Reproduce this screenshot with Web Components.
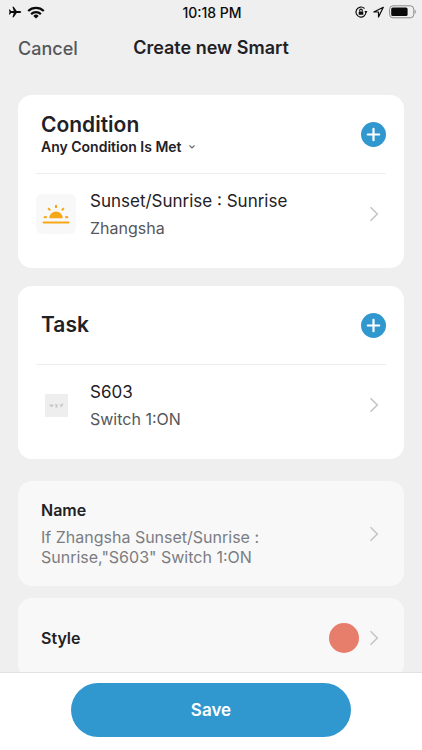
<!DOCTYPE html>
<html lang="en">
<head>
<meta charset="utf-8">
<meta name="viewport" content="width=device-width, initial-scale=1">
<title>Create new Smart</title>
<style>
  html, body { margin: 0; }
  body {
    --blue: #3198cf;
    --ink: #1f2126;
    --soft: #55575b;
    font-family: Inter, "Liberation Sans", sans-serif;
    color: var(--ink);
    background: #efefef;
  }
</style>
</head>
<body>
<smart-page>
  <status-bar slot="top">10:18 PM</status-bar>
  <nav-bar slot="top">Create new Smart</nav-bar>

  <rule-card heading="Condition" add-label="Add condition">
    <mode-picker slot="mode">Any Condition Is Met</mode-picker>
    <rule-row>
      <sunrise-icon slot="icon"></sunrise-icon>
      Sunset/Sunrise : Sunrise
      <span slot="detail">Zhangsha</span>
    </rule-row>
  </rule-card>

  <rule-card heading="Task" add-label="Add task">
    <rule-row>
      <switch-thumb slot="icon"></switch-thumb>
      S603
      <span slot="detail">Switch 1:ON</span>
    </rule-row>
  </rule-card>

  <setting-card class="name" heading="Name">
    <span slot="detail">If Zhangsha Sunset/Sunrise :<br>Sunrise,"S603" Switch 1:ON</span>
  </setting-card>
  <setting-card heading="Style">
    <color-dot slot="value"></color-dot>
  </setting-card>

  <save-bar slot="bottom">Save</save-bar>
</smart-page>

<script>
  const define = (name, html, setup) => {
    const template = document.createElement('template');
    template.innerHTML = `<style>
      *, :host { box-sizing: border-box; }
      button { font: inherit; color: inherit; background: none; border: 0; padding: 0; margin: 0; cursor: pointer; }
      h1, h2, p { margin: 0; }
      svg { display: block; flex: none; }
    </style>` + html;
    customElements.define(name, class extends HTMLElement {
      constructor() {
        super();
        this.attachShadow({ mode: 'open' }).append(template.content.cloneNode(true));
      }
      connectedCallback() {
        if (setup) setup(this, this.shadowRoot);
      }
    });
  };

  define('chevron-icon', `
    <style>:host { display: block; flex: none; }</style>
    <svg width="10" height="16" viewBox="0 0 10 16" fill="none" stroke="#c5c6ca" stroke-width="1.6" aria-hidden="true"><path d="M1.5 1.3 8.3 8l-6.8 6.7"/></svg>`);

  define('sunrise-icon', `
    <style>
      :host { display: grid; place-items: center; width: 40px; height: 40px; border-radius: 6px; background: #f8f8f8; }
    </style>
    <svg width="28" height="22" viewBox="0 0 28 22" fill="none" stroke="#f5a716" stroke-width="2" aria-hidden="true">
      <path d="M1.5 19.5h25" stroke-linecap="round"/>
      <path d="M7.3 15.2a6.7 6.7 0 0 1 13.4 0z" fill="#f5a716" stroke="none"/>
      <path d="M14 2v3M6.2 5.2l2 2.2M21.8 5.2l-2 2.2M1.8 14.2l3-.1M26.2 14.2l-3-.1"/>
    </svg>`);

  define('switch-thumb', `
    <style>:host { display: grid; place-items: center; width: 40px; height: 40px; }</style>
    <svg width="23" height="23" viewBox="0 0 23 23" fill="none" stroke="#b8b8b8" stroke-width=".9" aria-hidden="true">
      <rect width="23" height="23" fill="#eee" stroke="none"/>
      <path d="M4.8 11.2h3.4l-1.6 1.6zM10 10.6l2.4.5-1.8 1.6 2 .4M14.6 10.8l3.2.3-2.4 1.9M17.2 10.2l1-.6"/>
    </svg>`);

  define('color-dot', `
    <style>:host { display: block; width: 30px; height: 30px; border-radius: 50%; background: #e67e6b; }</style>`);

  define('status-bar', `
    <style>
      :host { display: grid; grid-template-columns: 1fr auto 1fr; align-items: center; height: 24px; padding: 0 6px 0 8px; font-size: 14px; font-weight: 500; color: #0b0b0b; }
      div { display: flex; align-items: center; gap: 5px; }
      .right { justify-content: end; }
    </style>
    <div>
      <svg width="14" height="14" viewBox="0 0 14 14" fill="#0b0b0b" aria-hidden="true"><path d="M13.2 7c0 .6-.8.9-1.6.9H8.7l-3 4.4H4.4l1.4-4.4H3.1L1.8 9.5H.9L1.5 7 .9 4.5h.9l1.3 1.6h2.7L4.4 1.7h1.3l3 4.4h2.9c.8 0 1.6.3 1.6.9z"/></svg>
      <svg width="18" height="13" viewBox="0 0 18 13" fill="none" stroke="#0b0b0b" stroke-width="2.2" aria-hidden="true"><path d="M1.2 5a11.2 11.2 0 0 1 15.6 0M4.1 8.1a7 7 0 0 1 9.8 0"/><path d="M9 12.6 6.3 9.9a3.8 3.8 0 0 1 5.4 0z" fill="#0b0b0b" stroke="none"/></svg>
    </div>
    <slot></slot>
    <div class="right">
      <svg width="14" height="14" viewBox="0 0 14 14" fill="none" stroke="#0b0b0b" stroke-width="1.1" aria-hidden="true">
        <path d="M12 7a5 5 0 1 1-1.5-3.5M12 7a5 5 0 0 1-1.6 3.6"/><path d="M10.3 6h3.2l-1.6 2.2z" fill="#0b0b0b" stroke="none"/>
        <rect x="4.7" y="6.4" width="4.6" height="3.4" rx=".5" fill="#0b0b0b" stroke="none"/><path d="M5.7 6.6V5.4a1.3 1.3 0 0 1 2.6 0v1.2"/>
      </svg>
      <svg width="11" height="12" viewBox="0 0 11 12" fill="none" stroke="#0b0b0b" stroke-width="1.2" stroke-linejoin="round" aria-hidden="true"><path d="M10.3 1.3.8 6h4.7v5z"/></svg>
      <svg width="27" height="14" viewBox="0 0 27 14" aria-hidden="true"><rect x=".6" y=".8" width="24.2" height="12" rx="3.4" fill="none" stroke="#8c8c8c"/><rect x="2.2" y="2.5" width="16.4" height="8.6" rx="1.6" fill="#0b0b0b"/><path d="M25.7 4.8c1.4.5 1.4 3.6 0 4.1z" fill="#8c8c8c"/></svg>
    </div>`);

  define('nav-bar', `
    <style>
      :host { display: grid; grid-template-columns: 1fr auto 1fr; align-items: center; height: 48px; padding: 0 18px; }
      button { justify-self: start; font-size: 18px; font-weight: 500; color: var(--soft); }
      h1 { font-size: 18px; font-weight: 600; line-height: 24px; }
    </style>
    <button type="button">Cancel</button>
    <h1><slot></slot></h1>`);

  define('mode-picker', `
    <style>
      :host { display: block; }
      button { display: flex; align-items: center; gap: 6px; font-size: 14px; line-height: 18px; font-weight: 600; }
    </style>
    <button type="button" aria-haspopup="listbox"><slot></slot>
      <svg width="8" height="6" viewBox="0 0 8 6" fill="none" stroke="#66686d" stroke-width="1.1" aria-hidden="true"><path d="M1.5 1.5 4 4l2.5-2.5"/></svg>
    </button>`);

  define('rule-card', `
    <style>
      :host { display: block; background: #fff; border-radius: 14px; padding: 0 18px 14px; }
      header { display: flex; align-items: center; justify-content: space-between; height: 79px; padding-left: 5px; border-bottom: 1px solid #ededed; }
      h2 { font-size: 21px; line-height: 26px; font-weight: 600; }
      svg circle { fill: var(--blue); }
    </style>
    <header>
      <div><h2></h2><slot name="mode"></slot></div>
      <button type="button" class="add">
        <svg width="25" height="25" viewBox="0 0 25 25" fill="none" stroke="#fff" stroke-width="2.2" stroke-linecap="round" aria-hidden="true"><circle cx="12.5" cy="12.5" r="12.5" stroke="none"/><path d="M12.5 6.8v11.4M6.8 12.5h11.4"/></svg>
      </button>
    </header>
    <slot></slot>`,
    (host, root) => {
      root.querySelector('h2').textContent = host.getAttribute('heading');
      root.querySelector('.add').setAttribute('aria-label', host.getAttribute('add-label'));
    });

  define('rule-row', `
    <style>
      :host { display: block; }
      button { display: flex; align-items: center; width: 100%; height: 80px; padding-right: 7px; text-align: left; }
      .text { flex: 1; display: grid; gap: 5px; padding-left: 14px; }
      .title { font-size: 17px; line-height: 22px; }
      .detail { font-size: 16px; line-height: 22px; color: var(--soft); }
    </style>
    <button type="button">
      <slot name="icon"></slot>
      <span class="text"><span class="title"><slot></slot></span><span class="detail"><slot name="detail"></slot></span></span>
      <chevron-icon></chevron-icon>
    </button>`);

  define('setting-card', `
    <style>
      :host { display: block; background: #f8f8f8; border-radius: 14px; }
      button { display: flex; align-items: center; gap: 10px; width: 100%; min-height: 80px; padding: 19px 25px 19px 23px; text-align: left; }
      .text { flex: 1; display: grid; gap: 7px; }
      .title { font-size: 16px; line-height: 20px; font-weight: 600; }
      ::slotted([slot=detail]) { font-size: 16px; line-height: 20px; color: #7b7d82; }
    </style>
    <button type="button">
      <span class="text"><span class="title"></span><slot name="detail"></slot></span>
      <slot name="value"></slot>
      <chevron-icon></chevron-icon>
    </button>`,
    (host, root) => { root.querySelector('.title').textContent = host.getAttribute('heading'); });

  define('save-bar', `
    <style>
      :host { display: flex; justify-content: center; background: #fff; border-top: 1px solid #e2e2e4; padding: 10px 71px 13px; }
      button { flex: 1; height: 54px; border-radius: 27px; background: var(--blue); color: #fff; font-size: 17px; font-weight: 600; }
    </style>
    <button type="button"><slot></slot></button>`);

  define('smart-page', `
    <style>
      :host { display: flex; flex-direction: column; height: 100vh; }
      main { flex: 1; min-height: 0; overflow-y: auto; scrollbar-width: none; display: flex; flex-direction: column; gap: 12px; padding: 23px 18px 12px; }
      main ::slotted(*) { flex: none; }
      ::slotted(rule-card) { margin-bottom: 6px; }
      ::slotted(setting-card.name) { margin-top: 4px; }
    </style>
    <slot name="top"></slot>
    <main><slot></slot></main>
    <slot name="bottom"></slot>`);
</script>
</body>
</html>
